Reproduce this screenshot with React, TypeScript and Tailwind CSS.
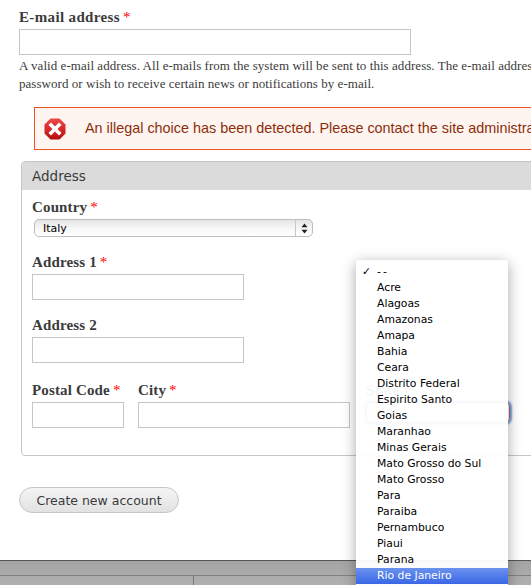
const states = ["Acre","Alagoas","Amazonas","Amapa","Bahia","Ceara","Distrito Federal","Espirito Santo","Goias","Maranhao","Minas Gerais","Mato Grosso do Sul","Mato Grosso","Para","Paraiba","Pernambuco","Piaui","Parana"];

function Req() {
  return <span className="ml-[3px] text-[#f00] font-normal">*</span>;
}
function Label({ text, req, wide }: { text: string; req?: boolean; wide?: boolean }) {
  return (
    <div className={`h-[18px] leading-[19px] text-[15px] ${wide ? "tracking-[0.35px]" : "tracking-[0.15px]"} font-bold text-[#3b3b3b] font-['Liberation_Serif',serif] whitespace-nowrap`}>
      {text}{req && <Req />}
    </div>
  );
}
function Input({ w }: { w: string }) {
  return <div className={`${w} h-[26px] border border-[#c6c6c6] bg-white`} />;
}

export default function App() {
  return (
    <div className="relative w-[531px] h-[585px] overflow-hidden bg-white font-['Liberation_Serif',serif]">
      <div className="w-[900px] pt-[8px] pl-[19px]">
        <Label text="E-mail address" req wide />
        <div className="mt-[3px]"><Input w="w-[392px]" /></div>
        <div className="mt-[2px] text-[13px] tracking-[0.05px] leading-[18px] text-[#3b3b3b] w-[700px]">
          <div className="whitespace-nowrap">A valid e-mail address. All e-mails from the system will be sent to this address. The e-mail address is not made public</div>
          <div className="whitespace-nowrap">password or wish to receive certain news or notifications by e-mail.</div>
        </div>
        <div className="ml-[15px] mt-[14px] h-[43px] w-[800px] flex items-center border border-[#ed541d] bg-[#fef5f1] pl-[9px]">
          <svg width="22" height="22" viewBox="0 0 22 22" className="shrink-0">
            <defs>
              <linearGradient id="g" x1="0" y1="0" x2="0" y2="1">
                <stop offset="0" stopColor="#ef4a4a" />
                <stop offset="1" stopColor="#b80c0c" />
              </linearGradient>
            </defs>
            <polygon points="6.5,0.5 15.5,0.5 21.5,6.5 21.5,15.5 15.5,21.5 6.5,21.5 0.5,15.5 0.5,6.5" fill="url(#g)" />
            <path d="M7 7L15 15M15 7L7 15" stroke="#fff" strokeWidth="3.6" strokeLinecap="square" />
          </svg>
          <span className="ml-[19px] text-[14.4px] text-[#8c2e0b] font-['Liberation_Sans',sans-serif] whitespace-nowrap">An illegal choice has been detected. Please contact the site administrator.</span>
        </div>
        <div className="ml-[2px] mt-[11px] w-[800px] h-[295px] border border-[#c6c6c6] rounded-[4px]">
          <div className="h-[28px] bg-[#dbdbdb] rounded-t-[3px] pl-[10px] text-[13.5px] leading-[29px] text-[#3b3b3b] font-['DejaVu_Sans',sans-serif]">Address</div>
          <div className="pl-[10px] pt-[8px]">
            <Label text="Country" req />
            <div className="ml-[2px] mt-[3px] w-[279px] h-[18px] flex rounded-[5px] border border-[#bdbdbd] bg-gradient-to-b from-[#e4e4e4] via-[#f6f6f6] to-[#ffffff]">
              <span className="flex-1 pl-[8px] text-[11px] leading-[18px] text-black font-['DejaVu_Sans',sans-serif]">Italy</span>
              <div className="w-[17px] border-l border-[#c6c6c6] flex items-center justify-center">
                <svg width="7" height="11" viewBox="0 0 7 11"><path d="M3.5 0.5L6.5 4.2H0.5ZM3.5 10.5L0.5 6.8H6.5Z" fill="#222" /></svg>
              </div>
            </div>
            <div className="mt-[16px]"><Label text="Address 1" req /></div>
            <div className="mt-[3px]"><Input w="w-[212px]" /></div>
            <div className="mt-[16px]"><Label text="Address 2" /></div>
            <div className="mt-[3px]"><Input w="w-[212px]" /></div>
            <div className="mt-[18px] flex">
              <div className="w-[106px]">
                <Label text="Postal Code" req />
                <div className="mt-[3px]"><Input w="w-[92px]" /></div>
              </div>
              <div className="w-[226px]">
                <Label text="City" req />
                <div className="mt-[3px]"><Input w="w-[212px]" /></div>
              </div>
              <div className="ml-[2px]">
                <Label text="State" req />
                <div className="mt-[3px] w-[144px] h-[21px] rounded-[5px] border border-[#b0606f] shadow-[0_0_2px_2px_#6f9fd8]" />
              </div>
            </div>
          </div>
        </div>
        <div className="mt-[31px] w-[160px] h-[26px] rounded-[13px] border border-[#c6c6c6] bg-gradient-to-b from-[#f4f4f4] to-[#e2e2e2] text-center text-[12.5px] leading-[26px] text-[#3a3a3a] font-['DejaVu_Sans',sans-serif]">Create new account</div>
      </div>

      <div className="absolute left-0 right-0 bottom-0 h-[25px] border-t border-[#555] bg-gradient-to-b from-[#a4a4a4] to-[#b0b0b0]">
        <div className="h-[15px] border-b border-[#808080]" />
        <div className="ml-[193px] h-[9px] w-px bg-[#777]" />
      </div>

      <div className="absolute left-[356px] top-[260px] w-[152px] h-[330px] rounded-t-[4px] bg-white/95 pt-[4px] shadow-[0_3px_14px_rgba(0,0,0,0.35)] text-[10.8px] font-['DejaVu_Sans',sans-serif] text-black">
        <div className="relative h-[16px] leading-[16px] pl-[21px]">
          <span className="absolute left-[6px]">✓</span><span className="tracking-[2px]">--</span>
        </div>
        {states.map((s) => (
          <div key={s} className="h-[16px] leading-[16px] pl-[21px]">{s}</div>
        ))}
        <div className="h-[16px] leading-[16px] pl-[21px] bg-gradient-to-b from-[#6a92ee] to-[#3a66e6] text-white">Rio de Janeiro</div>
      </div>
    </div>
  );
}
